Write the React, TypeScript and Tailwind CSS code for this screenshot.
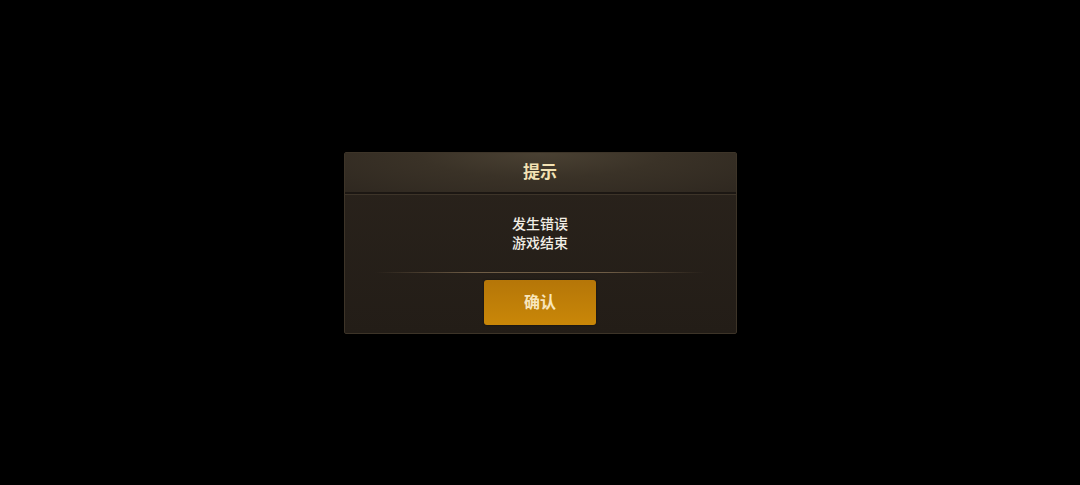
export default function App() {
  return (
    <main
      className="flex h-[485px] w-[1080px] items-start justify-center bg-black pt-[152px]"
      style={{ fontFamily: '"Noto Sans CJK SC", "Noto Sans", sans-serif' }}
    >
      <section className="flex h-[182px] w-[393px] flex-col overflow-hidden rounded-[2px] border border-[#3d3428] bg-[linear-gradient(180deg,#2a231c_0%,#231d17_100%)] shadow-[0_0_6px_rgba(0,0,0,0.8)]">
        <header className="flex h-[41px] items-center justify-center border-b-2 border-[#1c1713] pb-[4px] bg-[radial-gradient(ellipse_at_50%_0%,#4a4133_0%,#3a3227_45%,#2f2820_100%)]">
          <h1 className="text-[17px] font-bold leading-none text-[#f3e2b4]">提示</h1>
        </header>
        <div className="h-px bg-[#3d3429]" />
        <div className="flex flex-col items-center pt-[19px]">
          <p className="text-center text-[14px] font-medium leading-[19px] text-[#f2eee6]">
            发生错误
            <br />
            游戏结束
          </p>
          <div className="mt-[20px] h-px w-[330px] bg-[linear-gradient(90deg,rgba(120,100,75,0)_0%,#6e5c45_30%,#6e5c45_70%,rgba(120,100,75,0)_100%)]" />
          <button className="mt-[7px] flex h-[45px] w-[112px] items-center justify-center rounded-[3px] bg-[linear-gradient(180deg,#b57608_0%,#c98708_100%)] pb-[4px] text-[16px] font-bold leading-none text-[#f8e6bd] shadow-[0_0_2px_rgba(0,0,0,0.6)]">
            确认
          </button>
        </div>
      </section>
    </main>
  );
}
